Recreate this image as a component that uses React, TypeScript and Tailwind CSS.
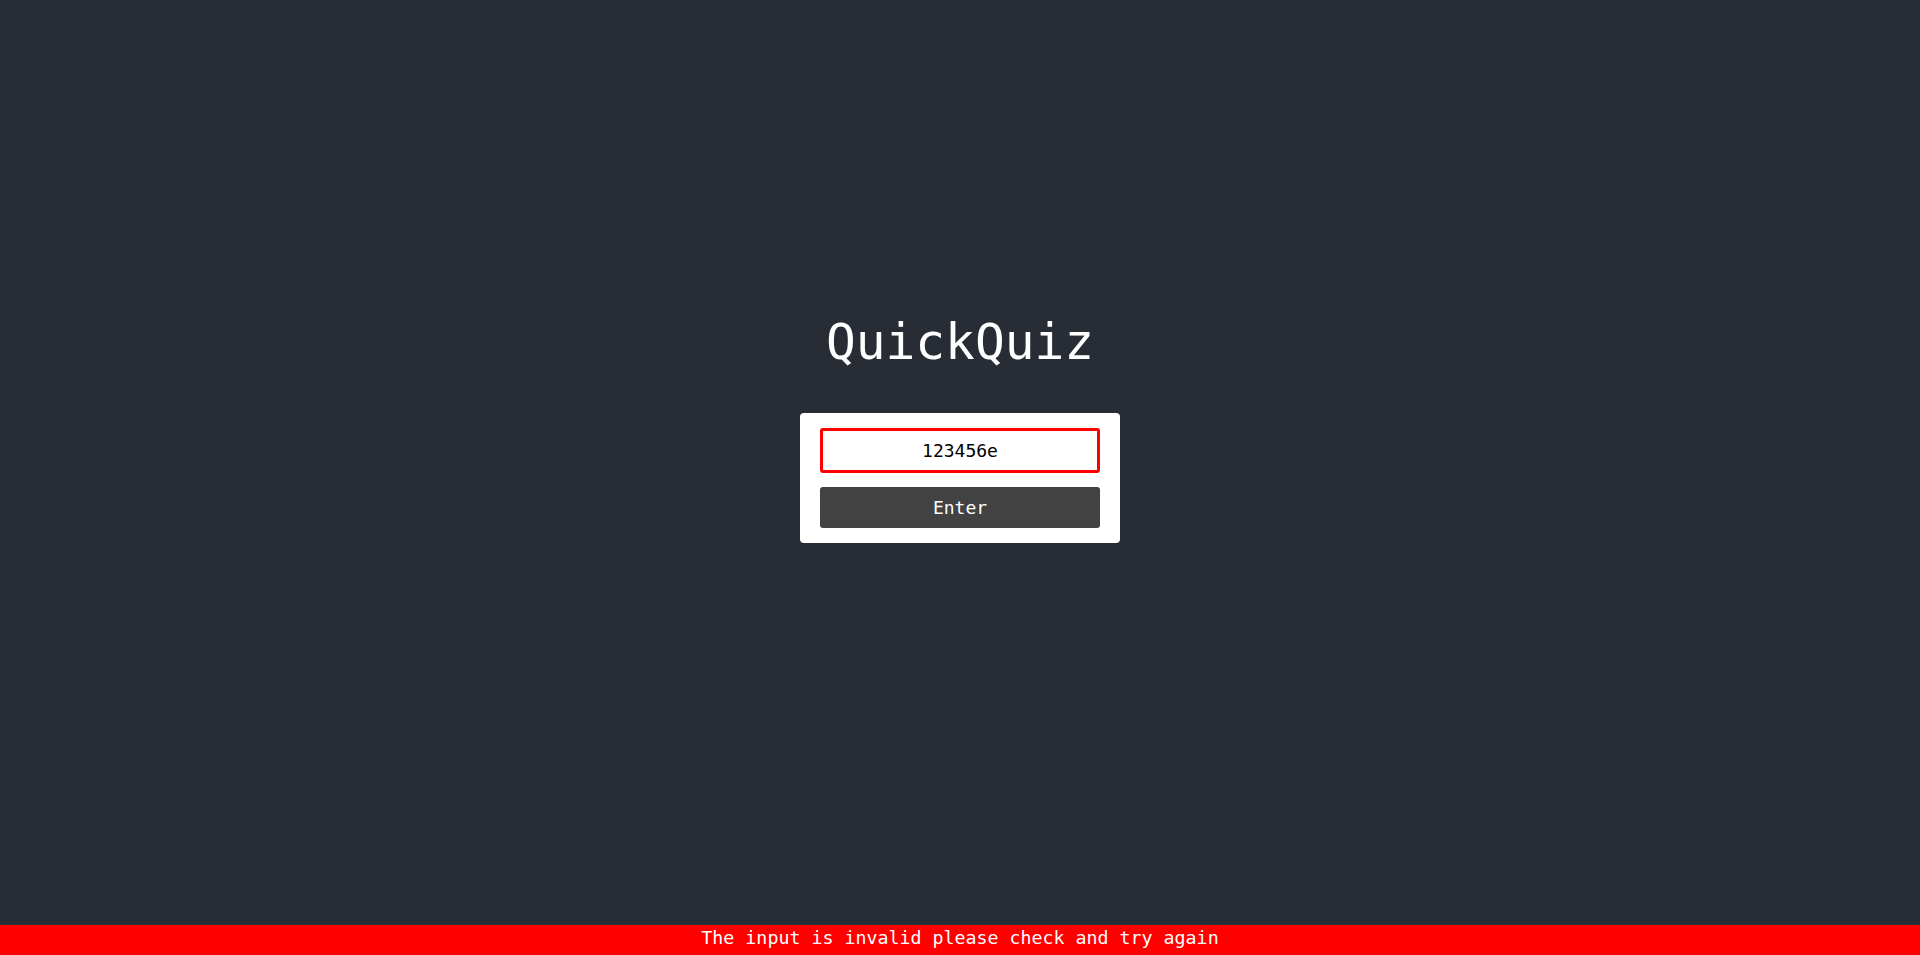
export default function App() {
  return (
    <div className="flex h-screen flex-col bg-[#282c34] font-['DejaVu_Sans_Mono',monospace]">
      <main className="flex flex-1 flex-col items-center pt-[318px]">
        <h1 className="text-[49.5px] leading-none text-white">QuickQuiz</h1>
        <form
          className="mt-[45px] flex w-[320px] flex-col gap-[14px] rounded bg-white px-5 py-[15px]"
          onSubmit={(e) => e.preventDefault()}
        >
          <input
            type="text"
            defaultValue="123456e"
            className="h-[45px] w-full rounded-[3px] border-[3px] border-[#ff0000] bg-white text-center text-[18px] text-black outline-none"
          />
          <button
            type="submit"
            className="h-[41px] w-full rounded-[3px] bg-[#424242] text-[18px] text-white"
          >
            Enter
          </button>
        </form>
      </main>
      <div className="flex h-[30px] items-center justify-center bg-[#ff0000] pb-[4px] text-[18.3px] text-white">
        The input is invalid please check and try again
      </div>
    </div>
  );
}
